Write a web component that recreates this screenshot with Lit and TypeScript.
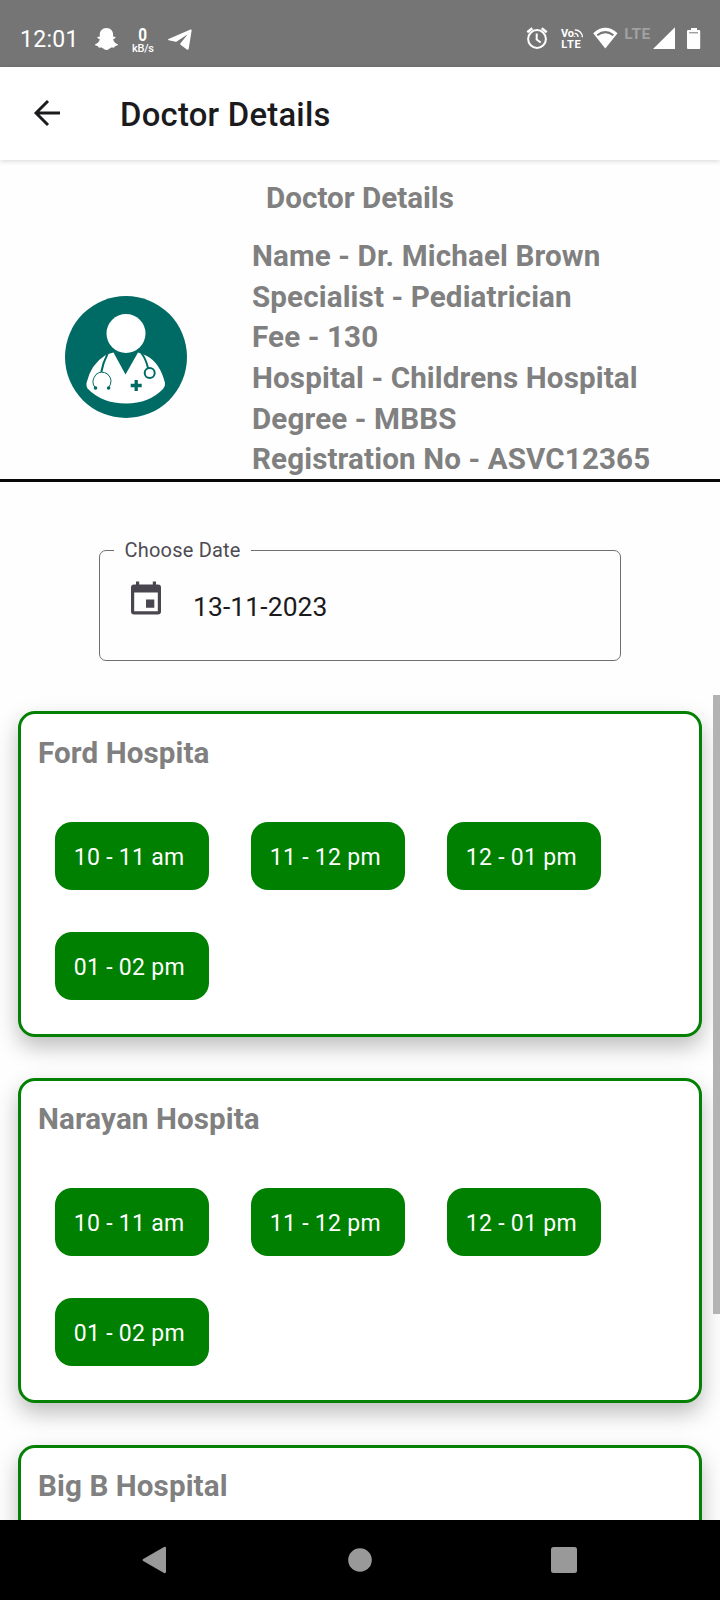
import { LitElement, html, css, svg } from "lit";
import { customElement, property } from "lit/decorators.js";

const SLOTS = ["10 - 11 am", "11 - 12 pm", "12 - 01 pm", "01 - 02 pm"];

const HOSPITALS = [
  { name: "Ford Hospita", slots: SLOTS },
  { name: "Narayan Hospita", slots: SLOTS },
  { name: "Big B Hospital", slots: [] },
];

const DETAILS = [
  "Name - Dr. Michael Brown",
  "Specialist - Pediatrician",
  "Fee - 130",
  "Hospital - Childrens Hospital",
  "Degree - MBBS",
  "Registration No - ASVC12365",
];

@customElement("status-bar")
export class StatusBar extends LitElement {
  static styles = css`
    :host {
      display: flex;
      justify-content: space-between;
      height: 66.5px;
      flex: none;
      background: #757575;
      color: #fff;
      font-family: Roboto, sans-serif;
    }
    .group {
      display: flex;
    }
    .time {
      width: 74px;
      padding-left: 20px;
      font-size: 23px;
      line-height: 79px;
      letter-spacing: 0.3px;
      white-space: nowrap;
    }
    svg {
      display: block;
      height: 66px;
      flex: none;
    }
    .small {
      font: 500 11px Roboto, sans-serif;
    }
    .zero {
      font: 700 18px Roboto, sans-serif;
    }
    .volte {
      font: 700 11px Roboto, sans-serif;
    }
    .lte {
      font: 700 15.5px Roboto, sans-serif;
    }
  `;

  render() {
    return html`
      <div class="group">
        <div class="time">12:01</div>
        <svg width="36" viewBox="94 0 36 66" fill="#fff">
          <path d="M106.5 28c4.3 0 6.6 3 6.6 6.6v2c.6.3 1.300-.1 1.900.1.900.5.500 1.300-.200 1.700-.800.400-1.800.500-1.700 1.200.700 2.300 2.200 3.900 4.600 4.600.500.600-.200 1.300-1.300 1.600l-1.500.400c-.500.300-.200 1.200-.900 1.400-1.100.200-2-.300-3.200.200-1.500.7-2.200 2.200-4.300 2.200s-2.900-1.500-4.400-2.200c-1.200-.5-2.100 0-3.200-.2-.700-.2-.400-1.100-.900-1.400l-1.500-.4c-1.100-.3-1.800-1-1.300-1.600 2.400-.7 3.900-2.300 4.600-4.600.1-.7-.9-.8-1.700-1.200-.7-.4-1.100-1.200-.2-1.700.6-.2 1.300.2 1.900-.1v-2c0-3.600 2.400-6.600 6.700-6.600z" />
        </svg>
        <svg width="36" viewBox="130 0 36 66" fill="#fff">
          <text class="zero" x="138.300" y="41" textLength="8.800" lengthAdjust="spacingAndGlyphs">0</text>
          <text class="small" x="132" y="51.500" textLength="22">kB/s</text>
        </svg>
        <svg width="30" viewBox="166 0 30 66" fill="#fff">
          <path d="M168.500 39.100 190.500 29.600Q191.900 29.200 191.600 30.800L188.700 48.700Q188.400 50.400 186.900 49.400L180.500 44.700 Q179.800 44 180.500 43.300L186.800 35.600Q187.300 34.700 186.300 35.200L176.700 41.400Q175.800 41.900 174.700 41.600L168.700 40.300Q167.400 39.700 168.500 39.100Z" />
        </svg>
      </div>
      <div class="group">
        <svg width="36" viewBox="524 0 36 66" fill="none" stroke="#fff">
          <circle cx="537" cy="39" r="8.900" stroke-width="2" />
          <path d="M536.700 33.500v6l4 3" stroke-width="2" />
          <path d="M527.300 32.200l5-4M546.700 32.200l-5-4" stroke-width="2.400" />
        </svg>
        <svg width="32" viewBox="560 0 32 66" fill="#fff">
          <text class="volte" x="561" y="37" textLength="13">Vo</text>
          <text class="volte" x="561.300" y="48.200" textLength="19.500">LTE</text>
          <g fill="none" stroke="#fff" stroke-width="1.400">
            <path d="M574.600 33.400a3.600 3.600 0 0 1 3.400 3.600M574.800 30.100a7 7 0 0 1 7.600 7.200" />
            <path d="M574.500 36.200v.8" />
          </g>
        </svg>
        <svg width="32" viewBox="592 0 32 66">
          <path d="M593.200 33.200Q605.300 22.500 617.500 33.200L605.300 48.400Z" fill="#fff" />
          <path d="M597.300 35.300Q605.300 29 613.400 35.300" fill="none" stroke="#757575" stroke-width="2" />
        </svg>
        <svg width="28" viewBox="624 0 28 66" fill="#a0a0a0">
          <text class="lte" x="624.300" y="38.500" textLength="26">LTE</text>
        </svg>
        <svg width="68" viewBox="652 0 68 66" fill="#fff">
          <path d="M653 49 675 27.300V49Z" />
          <path d="M691 28h6v2h2.200q1 0 1 1v17q0 1-1 1h-11.200q-1 0-1-1v-17q0-1 1-1H691Z" />
          <path d="M689.200 32.800h8.800" stroke="#757575" stroke-width="1" />
        </svg>
      </div>
    `;
  }
}

@customElement("hospital-card")
export class HospitalCard extends LitElement {
  @property() name = "";
  @property({ attribute: false }) slots: string[] = [];

  static styles = css`
    :host {
      display: block;
      box-sizing: border-box;
      flex: none;
      height: 325.500px;
      padding: 18.500px 17px 0;
      border: 3.300px solid #048004;
      border-radius: 17px;
      background: #fff;
      box-shadow: 0 10px 22px rgba(0, 0, 0, 0.26);
    }
    .name {
      font-size: 29.600px;
      line-height: 40px;
      font-weight: 700;
      letter-spacing: 0.100px;
      color: #808080;
    }
    .slots {
      display: grid;
      grid-template-columns: repeat(3, 154px);
      grid-auto-rows: 68px;
      gap: 42px;
      padding: 49px 0 0 17px;
    }
    .slot {
      box-sizing: border-box;
      padding-left: 18.700px;
      border-radius: 17px;
      background: #008000;
      color: #fff;
      font-size: 23px;
      line-height: 72px;
      letter-spacing: 0.300px;
      white-space: nowrap;
    }
  `;

  render() {
    return html`
      <div class="name">${this.name}</div>
      <div class="slots">
        ${this.slots.map((s) => html`<div class="slot">${s}</div>`)}
      </div>
    `;
  }
}

const doctorAvatar = svg`
  <circle cx="61" cy="61" r="61" fill="#006b64" />
  <circle cx="61" cy="37.500" r="19.500" fill="#fff" />
  <path d="M48.500 56.500 60.500 78.500 73 56.500Q78 58 82 60Q95 67 100 87Q100.500 90.500 98 93Q84 107.500 61 107.500Q37 107.500 22.500 92.500Q21 91 21.500 87Q26 68 40 59.500Q44 57.500 48.500 56.500Z" fill="#fff" />
  <g fill="none" stroke="#006b64">
    <path d="M42.500 58Q37.800 67 36.300 76" stroke-width="2" />
    <path d="M30.500 92Q25 86 31 78.500Q36.500 74 42.500 78Q49 84 43.500 92" stroke-width="1" />
    <path d="M76.300 57Q81 63 83 72" stroke-width="2" />
    <circle cx="84.700" cy="77" r="5" stroke-width="2" />
    <path d="M71.200 84v11M65.700 89.500h11" stroke-width="3.300" />
  </g>
  <circle cx="30.500" cy="92" r="1.800" fill="#006b64" />
  <circle cx="43.600" cy="92" r="1.800" fill="#006b64" />
`;

@customElement("app-root")
export class AppRoot extends LitElement {
  static styles = css`
    :host {
      display: flex;
      flex-direction: column;
      width: 720px;
      height: 1600px;
      overflow: hidden;
      background: #fefefe;
      font-family: Roboto, sans-serif;
    }
    svg {
      display: block;
      flex: none;
    }
    .appbar {
      display: flex;
      flex: none;
      align-items: center;
      box-sizing: border-box;
      height: 93.500px;
      padding-left: 33px;
      gap: 59px;
      background: #fff;
      box-shadow: 0 1px 5px rgba(0, 0, 0, 0.16);
      z-index: 1;
    }
    .title {
      font-size: 32.800px;
      line-height: 40px;
      font-weight: 500;
      letter-spacing: 0.250px;
      color: #1b1a1d;
      padding-top: 3.500px;
    }
    .doctor {
      flex: none;
      box-sizing: border-box;
      height: 321.500px;
      padding-top: 19px;
      border-bottom: 3px solid #080808;
      color: #808080;
      font-size: 29.600px;
      font-weight: 700;
      letter-spacing: 0.120px;
    }
    .heading {
      text-align: center;
      line-height: 39px;
      letter-spacing: 0;
    }
    .profile {
      display: grid;
      grid-template-columns: 252px 1fr;
      align-items: center;
      height: 244px;
      margin-top: 18px;
    }
    .avatar {
      justify-self: center;
      margin-bottom: 2px;
    }
    .row {
      line-height: 40.670px;
      white-space: nowrap;
    }
    .field {
      flex: none;
      box-sizing: border-box;
      width: 522px;
      height: 123px;
      min-width: 0;
      margin: 56.500px 0 0 99px;
      padding: 0 0 0 26px;
      border: 1.500px solid #6f6e71;
      border-radius: 7px;
    }
    .label {
      box-sizing: border-box;
      width: 137px;
      margin-left: -12px;
      padding: 0 0 0 10.500px;
      font-size: 20px;
      line-height: 24px;
      letter-spacing: 0.200px;
      color: #4d4b52;
      white-space: nowrap;
    }
    .value {
      display: flex;
      align-items: flex-start;
      gap: 32px;
      padding-left: 5px;
      padding-top: 18.500px;
    }
    .date {
      font-size: 26.400px;
      line-height: 32px;
      padding-top: 10.500px;
      letter-spacing: 0.130px;
      color: #1b1a1d;
    }
    .scroller {
      display: flex;
      flex: 1;
      min-height: 0;
      margin-top: 34px;
      overflow: hidden;
    }
    .list {
      display: flex;
      flex: 1;
      flex-direction: column;
      gap: 41.200px;
      padding: 16.200px 11px 0 18px;
    }
    .track {
      flex: none;
      width: 7px;
    }
    .thumb {
      height: 619px;
      background: #b3b3b3;
    }
    .nav {
      display: flex;
      flex: none;
      justify-content: space-between;
      align-items: center;
      box-sizing: border-box;
      height: 80px;
      padding: 0 143px 0 142px;
      background: #000;
      z-index: 1;
    }
    .home {
      margin-left: 3px;
    }
  `;

  render() {
    return html`
      <status-bar></status-bar>
      <header class="appbar">
        <svg width="28" height="28" viewBox="0 0 28 28" fill="none" stroke="#1b1a1d" stroke-width="2.900">
          <path d="M27 14H3M15 2 3 14 15 26" />
        </svg>
        <div class="title">Doctor Details</div>
      </header>
      <section class="doctor">
        <div class="heading">Doctor Details</div>
        <div class="profile">
          <svg class="avatar" width="122" height="122" viewBox="0 0 122 122">${doctorAvatar}</svg>
          <div>${DETAILS.map((d) => html`<div class="row">${d}</div>`)}</div>
        </div>
      </section>
      <fieldset class="field">
        <legend class="label">Choose Date</legend>
        <div class="value">
          <svg width="30" height="34" viewBox="0 0 30 34" fill="#49464f">
            <path fill-rule="evenodd" d="M5 .500h3.200V3.500H21.800V.500H25V3.500h2q3 0 3 3V30.500q0 3-3 3H3q-3 0-3-3V6.500q0-3 3-3h2ZM3.200 11.500V30.200H26.800V11.500ZM15 18.500h8.300v8.300H15Z" />
          </svg>
          <div class="date">13-11-2023</div>
        </div>
      </fieldset>
      <main class="scroller">
        <div class="list">
          ${HOSPITALS.map((h) => html`<hospital-card .name=${h.name} .slots=${h.slots}></hospital-card>`)}
        </div>
        <div class="track"><div class="thumb"></div></div>
      </main>
      <nav class="nav">
        <svg width="24" height="28" viewBox="0 0 24 28" fill="#999">
          <path d="M1.200 13 22 1q2-.8 2 1.200V25.800q0 2-2 1.200L1.200 15q-1.400-1 0-2Z" />
        </svg>
        <svg class="home" width="24" height="24" viewBox="0 0 24 24" fill="#999"><circle cx="12" cy="12" r="11.800" /></svg>
        <svg width="26" height="26" viewBox="0 0 26 26" fill="#999"><rect width="26" height="26" rx="2.500" /></svg>
      </nav>
    `;
  }
}
